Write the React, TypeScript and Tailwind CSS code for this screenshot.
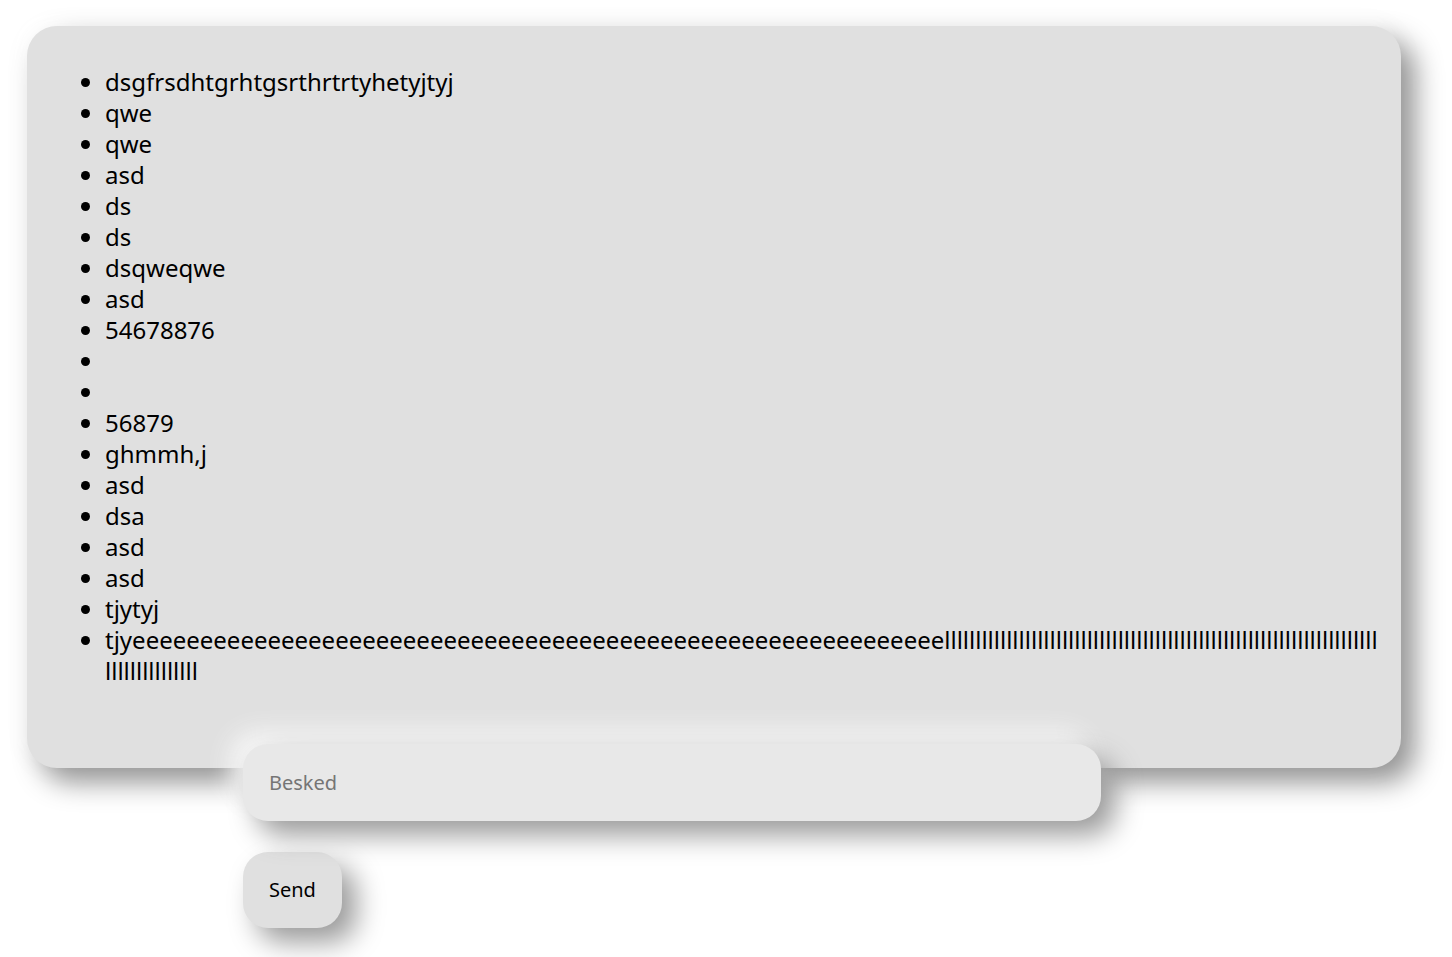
const messages = [
  "dsgfrsdhtgrhtgsrthrtrtyhetyjtyj",
  "qwe",
  "qwe",
  "asd",
  "ds",
  "ds",
  "dsqweqwe",
  "asd",
  "54678876",
  "",
  "",
  "56879",
  "ghmmh,j",
  "asd",
  "dsa",
  "asd",
  "asd",
  "tjytyj",
  "tjy" + "e".repeat(60) + "l".repeat(85),
];

const App = () => {
  return (
    <div className="min-h-screen bg-white pt-[26px] font-['Noto_Sans',sans-serif] text-black">
      <div className="ml-[27px] mr-[51px] rounded-[30px] bg-[#e0e0e0] pl-[38px] pr-[18px] pt-[40px] pb-[82px]
        shadow-[14px_14px_28px_#939393,-12px_-12px_24px_#ffffff,0_0_30px_rgba(0,0,0,0.04)]">
        <ul className="list-disc pl-10 text-[24px] leading-[31px] break-all">
          {messages.map((msg, i) => (
            <li key={i}>{msg}</li>
          ))}
        </ul>
      </div>

      <form className="ml-[243px] -mt-[24px] flex w-[858px] flex-col items-start gap-[31px]" onSubmit={(e) => e.preventDefault()}>
        <input
          type="text"
          placeholder="Besked"
          className="relative z-10 h-[77px] w-full rounded-[25px] bg-[#e8e8e8] px-[26px] text-[20px] outline-none
            placeholder:text-[#757575] shadow-[14px_14px_28px_#9a9a9a,-12px_-12px_24px_#f7f7f7]"
        />
        <button
          type="submit"
          className="h-[76px] rounded-[25px] bg-[#e0e0e0] px-[26px] text-[20px]
            shadow-[14px_14px_28px_#9a9a9a,-12px_-12px_24px_#ffffff]"
        >
          Send
        </button>
      </form>
    </div>
  );
};

export default App;
